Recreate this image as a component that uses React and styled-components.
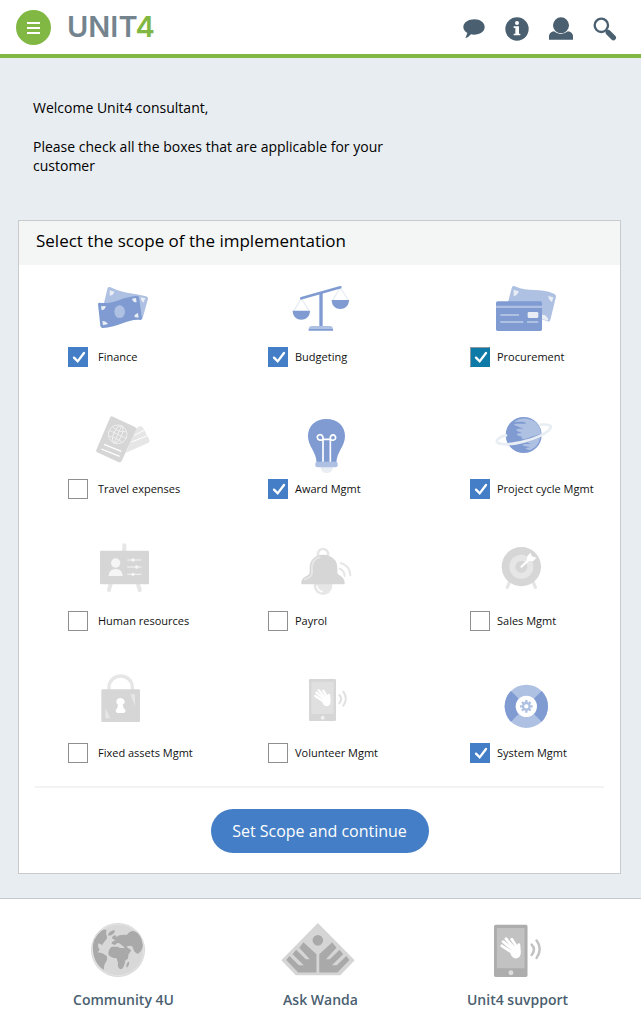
import React, { useState } from "react";
import styled, { createGlobalStyle, css } from "styled-components";

const GlobalStyle = createGlobalStyle`
  *, *::before, *::after { box-sizing: border-box; }
  body {
    margin: 0;
    background: #e8edf1;
    color: #111;
    font-family: "Open Sans", "Noto Sans", sans-serif;
  }
`;

const Page = styled.div`
  min-height: 100vh;
  display: flex;
  flex-direction: column;
`;

const TopBar = styled.header`
  display: flex;
  align-items: center;
  height: 58px;
  padding: 0 24px 0 16px;
  background: #fff;
  border-bottom: 4px solid #80b843;
`;

const MenuButton = styled.button`
  display: grid;
  place-items: center;
  width: 35px;
  height: 35px;
  padding: 0;
  border: 0;
  border-radius: 50%;
  background: #80b843;
`;

const Logo = styled.a`
  margin-left: 16px;
  color: #74848f;
  font: 600 29px/36px Inter, sans-serif;
  text-decoration: none;
`;

const LogoAccent = styled.span`
  color: #80b843;
`;

const Tools = styled.nav`
  display: flex;
  align-items: center;
  gap: 20px;
  margin-left: auto;
  padding-top: 4px;
`;

const ToolButton = styled.button`
  display: block;
  padding: 0;
  border: 0;
  background: none;
  color: #4a6070;

  svg { display: block; }
`;

const Intro = styled.section`
  padding: 40px 33px 44px;
  color: #000;
  font-size: 14px;
  line-height: 19px;

  p { max-width: 380px; margin: 0 0 20px; }
  p:last-child { margin: 0; }
`;

const Card = styled.form`
  margin: 1px 20px 24px 18px;
  border: 1px solid #c8cacb;
  background: #fff;
`;

const CardTitle = styled.h1`
  margin: 0;
  padding: 8px 17px 12px;
  background: #f4f6f5;
  color: #000;
  font-size: 17px;
  font-weight: 400;
  line-height: 24px;
`;

const ScopeGrid = styled.div`
  display: grid;
  grid-template-columns: 200fr 202fr 150fr;
  row-gap: 45px;
  padding: 15px 0 23px 49px;
`;

const ScopeOption = styled.label`
  display: grid;
  grid-template-columns: 20px 1fr;
  column-gap: 7px;
  row-gap: 7px;
  align-items: center;
  font-size: 11px;
  line-height: 20px;
  white-space: nowrap;

  &:nth-child(3n + 1) { column-gap: 10px; }
`;

const Artwork = styled.svg`
  grid-column: 1 / -1;
  display: block;
  width: 110px;
  height: 60px;
  overflow: visible;
`;

const Tick = styled.span`
  display: grid;
  width: 20px;
  height: 20px;

  > * { grid-area: 1 / 1; }
  svg { pointer-events: none; }
`;

const TickInput = styled.input`
  appearance: none;
  width: 20px;
  height: 20px;
  margin: 0;
  border: 1px solid #8f8f8f;
  background: #fff;

  &:checked {
    border-color: #437ec6;
    background: #437ec6;
  }

  ${(p) =>
    p.$active &&
    css`
      &:checked {
        border-color: #8f9aa0 #0d7aa8 #0d7aa8 #8f9aa0;
        background: #0d7aa8;
      }
    `}
`;

const Actions = styled.div`
  display: flex;
  justify-content: center;
  margin: 0 16px;
  padding: 21px 0 20px;
  border-top: 2px solid #f3f3f4;
`;

const PrimaryButton = styled.button`
  height: 44px;
  padding: 0 20px;
  min-width: 218px;
  border: 0;
  border-radius: 22px;
  background: #437ec6;
  color: #fff;
  font: 500 16px/20px "Open Sans", sans-serif;
`;

const Footer = styled.footer`
  flex: 1;
  display: grid;
  grid-template-columns: repeat(3, 1fr);
  padding: 24px 25px 10px;
  border-top: 1px solid #c4c9cd;
  background: #fff;
`;

const FooterLink = styled.a`
  display: flex;
  flex-direction: column;
  align-items: center;
  gap: 13px;
  color: #4a6070;
  font-size: 14px;
  font-weight: 600;
  line-height: 20px;
  text-decoration: none;
`;

const BLUE = "#7f9bd2";
const SKY = "#afc1e3";
const PALE = "#e8eef3";
const GREY = "#d6d6d6";
const MIST = "#e6e6e6";

const line = { fill: "none", strokeLinecap: "round", strokeLinejoin: "round" };

function Banknotes() {
  return (
    <Artwork viewBox="24 15 330 180" aria-hidden="true">
      <path fill={SKY} d="M143 38Q146 34 152 37C184 54 208 52 258 64Q265 66 264 72L248 129Q245 135 238 133L130 92Z" />
      <path fill={PALE} d="M149 46l14 4q-2 10-14 12zM256 70l-14-3q-1 9 8 16z" />
      <path fill={BLUE} d="M114 87Q114 83 119 83C158 90 184 66 230 62Q236 62 237 67L246 130Q246 135 241 135C204 131 170 160 127 159Q122 158 121 153Z" />
      <path fill={PALE} d="M123 94l14-1q0 10-12 13zM216 71l12-2 2 13q-12 0-14-11zM129 151l-2-13q11 0 17 9zM236 128l-2-14q-11 3-11 12z" />
      <ellipse cx="179" cy="110" rx="16" ry="19" fill={SKY} />
    </Artwork>
  );
}

function Scales() {
  return (
    <Artwork viewBox="624 15 330 180" aria-hidden="true">
      <g {...line} stroke={PALE} strokeWidth="4">
        <path d="M702 107L724 70L747 107M819 74L841 38L864 74" />
      </g>
      <path {...line} stroke={BLUE} strokeWidth="8" d="M724 70L841 37" />
      <path fill={BLUE} d="M778 52h10v103h-10zM698 107h52c0 36-52 36-52 0zM815 75h52c0 36-52 36-52 0zM746 161h73v6h-73z" />
      <path fill={SKY} d="M746 162q1-9 9-9h55q8 0 9 9z" />
    </Artwork>
  );
}

function Cards() {
  return (
    <Artwork viewBox="90 15 330 180" aria-hidden="true">
      <path fill={SKY} d="M216 36Q218 31 225 34C265 53 300 38 342 56Q349 59 348 65L331 135Q328 141 322 139L306 133V82H204Z" />
      <path fill={PALE} d="M221 44l15 5q-2 11-15 15zM340 67l-15-4q0 11 11 18zM306 120q9-4 19 12l-3 5-16-6z" />
      <path fill={BLUE} d="M168 84q0-5 5-5h129q4 0 4 5v79q0 5-5 5H173q-5 0-5-5z" />
      <path fill={SKY} d="M168 92h138v7H168z" />
      <rect x="263" y="111" width="32" height="18" rx="4" fill={PALE} />
      <path stroke={SKY} strokeWidth="6" d="M181 120h56M181 141h69M261 141h34" />
    </Artwork>
  );
}

function Passport() {
  return (
    <Artwork viewBox="24 21 330 180" aria-hidden="true">
      <path fill={MIST} d="M228 70L240 63Q247 63 249 68L269 106Q269 112 264 114L198 143Z" />
      <path stroke="#fff" strokeWidth="3" d="M223 91L252 76M215 111L262 92" />
      <path fill={GREY} d="M151 36Q154 32 159 35L225 66Q230 69 228 74L185 168Q181 174 175 171L111 142Q107 139 109 134Z" />
      <g fill="none" stroke="#efefef" strokeWidth="3">
        <circle cx="173" cy="88" r="28" />
        <ellipse cx="173" cy="88" rx="12" ry="28" transform="rotate(24 173 88)" />
        <path d="M185 62L162 114M148 76L198 100M158 66Q175 83 198 80M147 93Q165 96 185 110" />
      </g>
      <path stroke="#fff" strokeWidth="4" d="M132 118L184 139M124 132L179 154" />
    </Artwork>
  );
}

function Bulb() {
  return (
    <Artwork viewBox="624 21 330 180" aria-hidden="true">
      <path fill={PALE} d="M781 185h38q-3 19-19 19t-19-19z" />
      <path fill={BLUE} d="M799 42C833 42 855 64 855 93C855 125 830 139 829 174H770C769 139 744 125 744 93C744 64 766 42 799 42Z" />
      <path {...line} stroke="#fff" strokeWidth="5" d="M789 170V96C785 85 771 88 772 98C773 107 785 107 789 103H812C818 109 827 104 827 98C825 87 814 87 811 97V170" />
      <rect x="766" y="170" width="67" height="17" rx="6" fill={SKY} />
    </Artwork>
  );
}

function Planet() {
  return (
    <Artwork viewBox="90 21 330 180" aria-hidden="true">
      <circle cx="251" cy="90" r="54" fill={BLUE} />
      <path fill={SKY} d="M224 49Q240 38 261 41Q292 45 301 73L303 86L252 103Q240 99 247 96L232 91Q228 87 236 85H247L230 77Q227 72 235 71H251L224 61Q220 56 227 56H258Q258 51 247 50H224zM261 112L301 98Q294 126 269 136L257 131Q259 128 272 127L249 122Q247 116 258 117H272z" />
      <path {...line} stroke={PALE} strokeWidth="8" d="M198 91C168 98 160 116 187 117C218 121 294 103 324 78C340 64 334 56 302 59" />
    </Artwork>
  );
}

function Board() {
  return (
    <Artwork viewBox="24 30 330 180" aria-hidden="true">
      <path {...line} stroke={MIST} strokeWidth="12" d="M193 34V60M152 150L147 168M234 150L239 168" />
      <rect x="120" y="50" width="147" height="101" rx="4" fill={GREY} />
      <circle cx="167" cy="87" r="14" fill="#f5f5f5" />
      <path fill="#f5f5f5" d="M146 126q1-21 21-21t21 21z" />
      <path {...line} stroke="#f5f5f5" strokeWidth="3" d="M203 78H243M203 99H243M203 121H243" />
      <g fill="#f5f5f5">
        <circle cx="219" cy="78" r="5" />
        <circle cx="230" cy="99" r="5" />
        <circle cx="219" cy="121" r="5" />
      </g>
    </Artwork>
  );
}

function Bell() {
  return (
    <Artwork viewBox="624 30 330 180" aria-hidden="true">
      <circle cx="789" cy="155" r="28" fill={MIST} />
      <path {...line} stroke="#fff" strokeWidth="5" d="M771 157Q774 170 786 173" />
      <path fill="none" stroke={MIST} strokeWidth="8" d="M774 66V60a15 15 0 0 1 30 0V66" />
      <path fill={GREY} d="M770 66Q789 58 808 66Q832 76 832 101V116Q834 121 846 129Q855 138 854 151H724Q722 137 734 129Q747 123 749 116V98Q750 76 770 66Z" />
      <path {...line} stroke={MIST} strokeWidth="6" d="M779 70Q759 75 756 96V119Q754 130 734 136" />
      <path {...line} stroke={MIST} strokeWidth="6" d="M839 104Q853 110 854 126M842 87Q870 95 871 124" />
    </Artwork>
  );
}

function Target() {
  return (
    <Artwork viewBox="90 30 330 180" aria-hidden="true">
      <path {...line} stroke={MIST} strokeWidth="10" d="M208 145L202 160M280 145L286 160" />
      <circle cx="244" cy="98" r="59" fill={GREY} />
      <circle cx="244" cy="98" r="36" fill={MIST} />
      <circle cx="244" cy="98" r="18" fill={GREY} />
      <path {...line} stroke="#fff" strokeWidth="6" d="M244 98L272 73" />
      <path fill="#fff" d="M260 80L262 66L272 56L275 67L290 71L279 82Z" />
    </Artwork>
  );
}

function Padlock() {
  return (
    <Artwork viewBox="24 33 330 180" aria-hidden="true">
      <path fill="none" stroke={MIST} strokeWidth="10" d="M147 76V66a35 33 0 0 1 70 0V76" />
      <rect x="124" y="73" width="116" height="98" rx="4" fill={GREY} />
      <path fill={MIST} d="M211 88h14v35zM136 160h15L136 128z" />
      <path fill="#fff" d="M174 119q-7-5-5-11 3-9 12-9t13 9q2 6-6 11 1 11 9 17-1 8-5 8h-20q-5 0-5-8 6-5 7-17z" />
    </Artwork>
  );
}

function PhoneDrawing({ body, screen, home }) {
  return (
    <>
      <rect width="81" height="126" rx="4" fill={body} />
      <rect x="7" y="8" width="67" height="97" rx="2" fill={screen} />
      <circle cx="41" cy="116" r="6" fill={home} />
      <g {...line} stroke="#fff" strokeWidth="7">
        <path d="M45 68L19 51M48 62L22 41M52 60L29 34M58 58L43 35M61 64L60 48" />
        <ellipse cx="52" cy="67" rx="9" ry="11" fill="#fff" transform="rotate(-20 52 67)" />
      </g>
      <path {...line} stroke={screen} strokeWidth="6" d="M91 48Q102 59 91 73M103 38Q118 58 103 80" />
    </>
  );
}

function WavingPhone() {
  return (
    <Artwork viewBox="624 33 330 180" aria-hidden="true">
      <g transform="translate(747 42)">
        <PhoneDrawing body={GREY} screen="#e0e0e0" home="#f0f0f0" />
      </g>
    </Artwork>
  );
}

function Gearing() {
  return (
    <Artwork viewBox="90 423 330 180" aria-hidden="true">
      <circle cx="259" cy="514" r="65" fill={SKY} />
      <path fill={BLUE} d="M213 468A65 65 0 0 0 213 560L259 514ZM305 468A65 65 0 0 1 305 560L259 514Z" />
      <circle cx="259" cy="514" r="32" fill="#fff" />
      <g fill="none" stroke={SKY}>
        <circle cx="259" cy="514" r="10" strokeWidth="7" />
        <path strokeWidth="7" d="M259 503V495M259 525V533M248 514H240M270 514H278M251 506L246 501M267 522L272 527M267 506L272 501M251 522L246 527" />
      </g>
    </Artwork>
  );
}

const Globe = () => (
  <svg width="66" height="54" viewBox="0 0 66 54" aria-hidden="true">
    <g transform="scale(.351 .333) translate(-117 -83)">
      <ellipse cx="194" cy="164" rx="77" ry="81" fill="#d8d8d8" />
      <ellipse cx="194" cy="164" rx="73" ry="77" fill="none" stroke="#e3e3e3" strokeWidth="3" />
      <path fill="#a9a9a9" d="M145 108Q154 100 161 104L160 116Q165 126 161 132Q157 138 153 142L149 149L138 144Q135 156 142 163L136 171Q150 172 162 182L163 193Q158 202 155 209L153 224Q131 207 125 181Q119 155 126 134Q133 119 145 108ZM166 120Q165 109 183 104Q188 108 180 116Q171 124 166 120ZM176 145Q174 139 187 135L178 130Q174 124 186 119L190 125Q198 117 219 119Q226 107 238 107Q254 111 261 132L265 151Q262 168 250 176L241 169L234 153Q227 149 218 154L232 165Q227 173 224 177L222 190L215 195Q211 222 201 222Q191 216 194 203L190 189Q171 188 166 175Q168 157 178 154H191L201 158H214L204 149Q196 140 191 144L185 149ZM219 205Q224 196 226 201Q226 212 220 217Q216 215 219 205Z" />
    </g>
  </svg>
);

const WANDA_HAND =
  "M675 194L684 182L711 210H725L693 177L703 163L731 192H742L712 157L724 141L761 177V232H709Z";

const Wanda = () => (
  <svg width="80" height="54" viewBox="0 0 80 54" aria-hidden="true">
    <g transform="scale(.351 .333) translate(-660 -83)">
      <path fill="#d5d5d5" d="M765 83L870 195L829 240H702L661 195Z" />
      <ellipse cx="765" cy="135" rx="15" ry="16" fill="#a9a9a9" />
      <path fill="#a9a9a9" d={WANDA_HAND} />
      <path fill="#a9a9a9" d={WANDA_HAND} transform="translate(1530 0) scale(-1 1)" />
    </g>
  </svg>
);

const SupportPhone = () => (
  <svg width="48" height="54" viewBox="0 -4 116 130" aria-hidden="true">
    <PhoneDrawing body="#adadad" screen="#c2c2c2" home="#dedede" />
  </svg>
);

const OPTIONS = [
  { name: "Finance", art: Banknotes, on: true },
  { name: "Budgeting", art: Scales, on: true },
  { name: "Procurement", art: Cards, on: true, active: true },
  { name: "Travel expenses", art: Passport },
  { name: "Award Mgmt", art: Bulb, on: true },
  { name: "Project cycle Mgmt", art: Planet, on: true },
  { name: "Human resources", art: Board },
  { name: "Payrol", art: Bell },
  { name: "Sales Mgmt", art: Target },
  { name: "Fixed assets Mgmt", art: Padlock },
  { name: "Volunteer Mgmt", art: WavingPhone },
  { name: "System Mgmt", art: Gearing, on: true },
];

const LINKS = [
  { name: "Community 4U", art: Globe },
  { name: "Ask Wanda", art: Wanda },
  { name: "Unit4 suvpport", art: SupportPhone },
];

function Option({ name, art: Art, on = false, active }) {
  const [checked, setChecked] = useState(on);
  return (
    <ScopeOption>
      <Art />
      <Tick>
        <TickInput
          type="checkbox"
          name={name}
          checked={checked}
          $active={active}
          onChange={(e) => setChecked(e.target.checked)}
        />
        {checked && (
          <svg width="20" height="20" viewBox="0 0 60 60" aria-hidden="true">
            <path d="M18 32L29 43L48 18" fill="none" stroke="#fff" strokeWidth="7" strokeLinecap="round" />
          </svg>
        )}
      </Tick>
      <span>{name}</span>
    </ScopeOption>
  );
}

export default function App() {
  return (
    <Page>
      <GlobalStyle />
      <TopBar>
        <MenuButton aria-label="Menu">
          <svg width="13" height="13" viewBox="0 0 13 13" aria-hidden="true">
            <path d="M0 2h13M0 7h13M0 12h13" stroke="#fff" strokeWidth="2" />
          </svg>
        </MenuButton>
        <Logo href="#">
          UNIT<LogoAccent>4</LogoAccent>
        </Logo>
        <Tools>
          <ToolButton aria-label="Messages">
            <svg width="22" height="24" viewBox="0 0 66 72" fill="currentColor" aria-hidden="true">
              <path d="M34 7C52 7 65 17 65 30C65 44 51 53 33 53Q28 53 24 52Q18 60 7 64L13 48Q1 41 1 30C1 17 16 7 34 7Z" />
            </svg>
          </ToolButton>
          <ToolButton aria-label="Information">
            <svg width="24" height="24" viewBox="0 0 72 72" aria-hidden="true">
              <circle cx="36" cy="36" r="35" fill="currentColor" />
              <circle cx="36" cy="18" r="6" fill="#fff" />
              <path fill="#fff" d="M26 28H42V50H46V55H26V50H31V33H26Z" />
            </svg>
          </ToolButton>
          <ToolButton aria-label="Profile">
            <svg width="24" height="24" viewBox="0 0 72 72" fill="currentColor" aria-hidden="true">
              <path d="M0 68V56Q2 45 15 43Q34 59 57 43Q70 45 72 56V68Z" />
              <ellipse cx="36" cy="25" rx="24" ry="24" />
            </svg>
          </ToolButton>
          <ToolButton aria-label="Search">
            <svg width="24" height="24" viewBox="0 0 72 72" fill="none" stroke="currentColor" aria-hidden="true">
              <circle cx="25" cy="25" r="20" strokeWidth="7" />
              <path d="M39 39L46 46" strokeWidth="7" />
              <path d="M46 47L61 62" strokeWidth="16" strokeLinecap="round" />
            </svg>
          </ToolButton>
        </Tools>
      </TopBar>
      <Intro>
        <p>Welcome Unit4 consultant,</p>
        <p>Please check all the boxes that are applicable for your customer</p>
      </Intro>
      <Card onSubmit={(e) => e.preventDefault()}>
        <CardTitle>Select the scope of the implementation</CardTitle>
        <ScopeGrid>
          {OPTIONS.map((o) => (
            <Option key={o.name} {...o} />
          ))}
        </ScopeGrid>
        <Actions>
          <PrimaryButton type="submit">Set Scope and continue</PrimaryButton>
        </Actions>
      </Card>
      <Footer>
        {LINKS.map(({ name, art: Art }) => (
          <FooterLink key={name} href="#">
            <Art />
            {name}
          </FooterLink>
        ))}
      </Footer>
    </Page>
  );
}
